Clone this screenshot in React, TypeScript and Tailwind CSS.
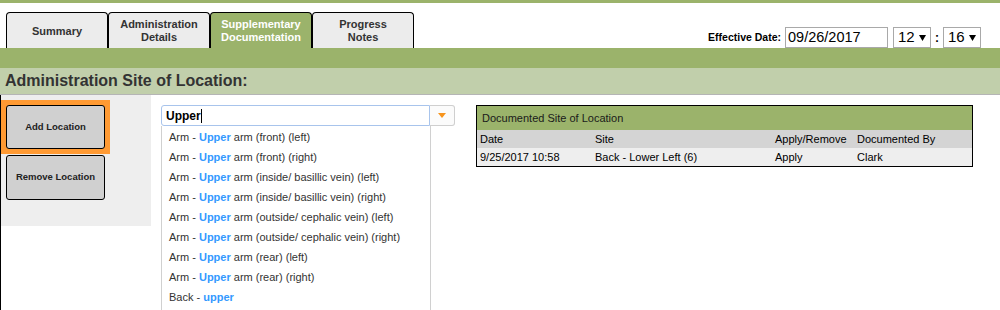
const tabs = [
  { label: ['Summary'], active: false },
  { label: ['Administration', 'Details'], active: false },
  { label: ['Supplementary', 'Documentation'], active: true },
  { label: ['Progress', 'Notes'], active: false },
];

// dropdown suggestions: [before, match, after]
const options: [string, string, string][] = [
  ['Arm - ', 'Upper', ' arm (front) (left)'],
  ['Arm - ', 'Upper', ' arm (front) (right)'],
  ['Arm - ', 'Upper', ' arm (inside/ basillic vein) (left)'],
  ['Arm - ', 'Upper', ' arm (inside/ basillic vein) (right)'],
  ['Arm - ', 'Upper', ' arm (outside/ cephalic vein) (left)'],
  ['Arm - ', 'Upper', ' arm (outside/ cephalic vein) (right)'],
  ['Arm - ', 'Upper', ' arm (rear) (left)'],
  ['Arm - ', 'Upper', ' arm (rear) (right)'],
  ['Back - ', 'upper', ''],
];

const TimeSelect = ({ value }: { value: string }) => (
  <div className="flex items-center justify-between w-[38px] h-[21px] border border-[#a9a9a9] bg-white pl-[4px] pr-[4px] text-[15px] text-black">
    <span>{value}</span>
    <svg width="7" height="7" viewBox="0 0 7 7">
      <path d="M0 1h7L3.5 7z" fill="#000" />
    </svg>
  </div>
);

const App = () => {
  return (
    <div className="w-[1000px] h-[310px] overflow-hidden bg-white text-[#333] font-['Liberation_Sans',Arial,sans-serif]">
      {/* top strip */}
      <div className="h-[3px] bg-[#9bb36b]" />

      {/* tabs + effective date */}
      <div className="flex items-end justify-between h-[45px] pl-[6px] pr-[19px]">
        <div className="flex">
          {tabs.map((t) => (
            <div
              key={t.label.join(' ')}
              className={`flex flex-col items-center justify-center w-[102px] h-[36px] pt-[1px] border border-b-0 border-black rounded-t-[4px] text-[11px] font-bold leading-[13px] ${
                t.active ? 'bg-[#9bb36b] text-white' : 'bg-[#ececec] text-[#333]'
              }`}
            >
              {t.label.map((l) => (
                <span key={l}>{l}</span>
              ))}
            </div>
          ))}
        </div>
        <div className="flex items-center">
          <span className="text-[10.5px] font-bold text-black mr-[4px]">Effective Date:</span>
          <div className="w-[103px] h-[21px] border border-[#a9a9a9] px-[2px] text-[14.5px] leading-[19px] text-black mr-[5px]">
            09/26/2017
          </div>
          <TimeSelect value="12" />
          <span className="w-[12px] text-center text-[12px] font-bold text-black">:</span>
          <TimeSelect value="16" />
        </div>
      </div>

      {/* green band */}
      <div className="h-[20px] bg-[#9bb36b]" />

      {/* section title */}
      <div className="h-[27px] bg-[#c1cfab] border-b border-[#b5b5b5] pl-[5px] text-[16px] font-bold leading-[26px] text-[#333]">
        Administration Site of Location:
      </div>

      {/* content */}
      <div className="flex h-[220px] border-l border-black">
        {/* left buttons */}
        <div className="w-[150px] h-[131px] bg-[#eeeeee] pt-[5px]">
          <div className="w-[109px] bg-[#ff9a33] p-[5px]">
            <div className="flex items-center justify-center h-[44px] bg-[#d0d0d0] border border-black rounded-[3px] text-[9.5px] font-bold text-[#222]">
              Add Location
            </div>
          </div>
          <div className="flex items-center justify-center w-[99px] h-[45px] ml-[5px] mt-[1px] bg-[#d0d0d0] border border-black rounded-[3px] text-[9.5px] font-bold text-[#222]">
            Remove Location
          </div>
        </div>

        {/* combo box */}
        <div className="ml-[10px] pt-[10px] w-[294px]">
          <div className="flex h-[21px]">
            <div className="flex items-center w-[269px] border border-[#a8c4ec] rounded-l-[3px] pl-[4px] text-[12px] font-bold text-black">
              Upper<span className="w-px h-[14px] bg-black" />
            </div>
            <div className="flex items-center justify-center w-[25px] border border-l-0 border-[#cfcfcf] rounded-r-[3px] bg-[#fbfbfb]">
              <svg width="8" height="5" viewBox="0 0 8 5">
                <path d="M0 0h8L4 5z" fill="#f7941d" />
              </svg>
            </div>
          </div>
          <div className="w-[270px] h-[200px] border-x border-[#d0d0d0] pt-[1px] pl-[7px]">
            {options.map(([a, m, b], i) => (
              <div key={i} className="h-[20px] leading-[20px] text-[11px] text-[#333] whitespace-nowrap">
                {a}
                <span className="font-semibold text-[#3399ff]">{m}</span>
                {b}
              </div>
            ))}
          </div>
        </div>

        {/* documented table */}
        <div className="ml-[21px] mt-[10px]">
          <div className="w-[497px] border border-black text-[11px] text-black">
            <div className="h-[24px] leading-[24px] bg-[#9bb36b] pl-[5px] text-[#1a1a1a]">Documented Site of Location</div>
            <div className="flex h-[18px] leading-[18px] bg-[#d4d4d4] pl-[3px]">
              <span className="w-[115px]">Date</span>
              <span className="w-[180px]">Site</span>
              <span className="w-[82px]">Apply/Remove</span>
              <span>Documented By</span>
            </div>
            <div className="flex h-[18px] leading-[18px] bg-[#eeeeee] pl-[3px]">
              <span className="w-[115px]">9/25/2017 10:58</span>
              <span className="w-[180px]">Back - Lower Left (6)</span>
              <span className="w-[82px]">Apply</span>
              <span>Clark</span>
            </div>
          </div>
        </div>
      </div>
    </div>
  );
};

export default App;
